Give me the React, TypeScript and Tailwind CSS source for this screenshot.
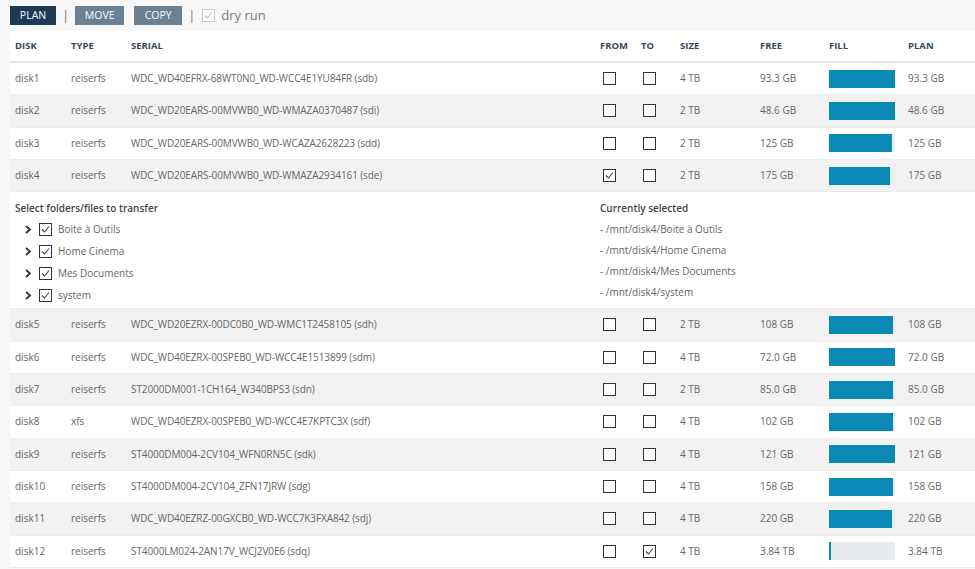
import React from "react";

type Disk = {
  name: string;
  type: string;
  serial: string;
  from: boolean;
  to: boolean;
  size: string;
  free: string;
  fill: number;
};

const disks: Disk[] = [
  { name: "disk1", type: "reiserfs", serial: "WDC_WD40EFRX-68WT0N0_WD-WCC4E1YU84FR (sdb)", from: false, to: false, size: "4 TB", free: "93.3 GB", fill: 66 },
  { name: "disk2", type: "reiserfs", serial: "WDC_WD20EARS-00MVWB0_WD-WMAZA0370487 (sdi)", from: false, to: false, size: "2 TB", free: "48.6 GB", fill: 66 },
  { name: "disk3", type: "reiserfs", serial: "WDC_WD20EARS-00MVWB0_WD-WCAZA2628223 (sdd)", from: false, to: false, size: "2 TB", free: "125 GB", fill: 63 },
  { name: "disk4", type: "reiserfs", serial: "WDC_WD20EARS-00MVWB0_WD-WMAZA2934161 (sde)", from: true, to: false, size: "2 TB", free: "175 GB", fill: 61 },
  { name: "disk5", type: "reiserfs", serial: "WDC_WD20EZRX-00DC0B0_WD-WMC1T2458105 (sdh)", from: false, to: false, size: "2 TB", free: "108 GB", fill: 64 },
  { name: "disk6", type: "reiserfs", serial: "WDC_WD40EZRX-00SPEB0_WD-WCC4E1513899 (sdm)", from: false, to: false, size: "4 TB", free: "72.0 GB", fill: 66 },
  { name: "disk7", type: "reiserfs", serial: "ST2000DM001-1CH164_W340BPS3 (sdn)", from: false, to: false, size: "2 TB", free: "85.0 GB", fill: 64 },
  { name: "disk8", type: "xfs", serial: "WDC_WD40EZRX-00SPEB0_WD-WCC4E7KPTC3X (sdf)", from: false, to: false, size: "4 TB", free: "102 GB", fill: 64 },
  { name: "disk9", type: "reiserfs", serial: "ST4000DM004-2CV104_WFN0RN5C (sdk)", from: false, to: false, size: "4 TB", free: "121 GB", fill: 66 },
  { name: "disk10", type: "reiserfs", serial: "ST4000DM004-2CV104_ZFN17JRW (sdg)", from: false, to: false, size: "4 TB", free: "158 GB", fill: 64 },
  { name: "disk11", type: "reiserfs", serial: "WDC_WD40EZRZ-00GXCB0_WD-WCC7K3FXA842 (sdj)", from: false, to: false, size: "4 TB", free: "220 GB", fill: 63 },
  { name: "disk12", type: "reiserfs", serial: "ST4000LM024-2AN17V_WCJ2V0E6 (sdq)", from: false, to: true, size: "4 TB", free: "3.84 TB", fill: 2 },
];

const folders = ["Boite à Outils", "Home Cinema", "Mes Documents", "system"];

const cols = "grid grid-cols-[56px_60px_469px_41px_39px_80px_69px_79px_1fr]";

function Check({ checked, muted }: { checked: boolean; muted?: boolean }) {
  return (
    <span
      className={`flex h-[13px] w-[13px] shrink-0 items-center justify-center border bg-white ${
        muted ? "border-[#c4cbd1]" : "border-[#333]"
      }`}
    >
      {checked && (
        <svg width="11" height="11" viewBox="0 0 11 11">
          <path
            d="M2 5.5 L4.5 8 L9 2.5"
            fill="none"
            stroke={muted ? "#b8c0c6" : "#444"}
            strokeWidth="1.1"
          />
        </svg>
      )}
    </span>
  );
}

function DiskRow({ d, shade }: { d: Disk; shade: boolean }) {
  return (
    <div
      className={`${cols} h-[32.33px] items-center border-b border-[#ececec] text-[10px] text-[#666] ${
        shade ? "bg-[#f2f2f2]" : "bg-white"
      }`}
    >
      <div className="px-[5px]">{d.name}</div>
      <div className="px-[5px]">{d.type}</div>
      <div className="px-[5px] tracking-[-0.1px]">{d.serial}</div>
      <div className="px-[8px]">
        <Check checked={d.from} />
      </div>
      <div className="px-[7px]">
        <Check checked={d.to} />
      </div>
      <div className="px-[5px]">{d.size}</div>
      <div className="px-[5px]">{d.free}</div>
      <div className="px-[5px]">
        <div className="h-[18px] w-[66px] bg-[#e8ecef]">
          <div className="h-full bg-[#0a89b7]" style={{ width: d.fill }} />
        </div>
      </div>
      <div className="px-[5px]">{d.free}</div>
    </div>
  );
}

function Chevron() {
  return (
    <svg width="8" height="9" viewBox="0 0 8 9">
      <path d="M2 1 L6 4.5 L2 8" fill="none" stroke="#333" strokeWidth="1.8" />
    </svg>
  );
}

function TransferPanel() {
  return (
    <div className="grid h-[117px] grid-cols-[585px_1fr] border-b border-[#ececec] bg-white text-[10px] text-[#666]">
      <div className="px-[5px] pt-[9px]">
        <p className="font-semibold text-[#444]">Select folders/files to transfer</p>
        <div className="mt-[6px] flex flex-col gap-[7px]">
          {folders.map((f) => (
            <div key={f} className="flex h-[15px] items-center pl-[9px]">
              <Chevron />
              <span className="ml-[7px]">
                <Check checked />
              </span>
              <span className="ml-[6px]">{f}</span>
            </div>
          ))}
        </div>
      </div>
      <div className="px-[5px] pt-[9px]">
        <p className="font-semibold text-[#444]">Currently selected</p>
        <div className="mt-[6px] flex flex-col gap-[7px]">
          {folders.map((f) => (
            <p key={f} className="h-[14px]">
              - /mnt/disk4/{f}
            </p>
          ))}
        </div>
      </div>
    </div>
  );
}

export default function App() {
  return (
    <div className="min-h-[569px] bg-[#f7f7f7] pl-[10px] font-['Open_Sans',sans-serif]">
      <div className="flex h-[31px] items-center text-[10.5px]">
        <button className="h-[19px] w-[46px] bg-[#1c3a56] text-white">PLAN</button>
        <span className="ml-[6px] text-[13px] text-[#777]">|</span>
        <button className="ml-[6px] h-[19px] w-[49px] bg-[#6a8194] text-white">MOVE</button>
        <button className="ml-[10px] h-[19px] w-[48px] bg-[#6a8194] text-white">COPY</button>
        <span className="ml-[6px] text-[13px] text-[#777]">|</span>
        <span className="ml-[7px] flex items-center gap-[6px] text-[13px] text-[#777]">
          <Check checked muted />
          dry run
        </span>
      </div>
      <div className="bg-white">
        <div className={`${cols} h-8 items-center border-b-2 border-[#e3e6e8] text-[9.5px] font-bold text-[#34495e]`}>
          <div className="px-[5px]">DISK</div>
          <div className="px-[5px]">TYPE</div>
          <div className="px-[5px]">SERIAL</div>
          <div className="px-[5px]">FROM</div>
          <div className="px-[5px]">TO</div>
          <div className="px-[5px]">SIZE</div>
          <div className="px-[5px]">FREE</div>
          <div className="px-[5px]">FILL</div>
          <div className="px-[5px]">PLAN</div>
        </div>
        {disks.slice(0, 4).map((d, i) => (
          <DiskRow key={d.name} d={d} shade={i % 2 === 1} />
        ))}
        <TransferPanel />
        {disks.slice(4).map((d, i) => (
          <DiskRow key={d.name} d={d} shade={i % 2 === 0} />
        ))}
      </div>
    </div>
  );
}
